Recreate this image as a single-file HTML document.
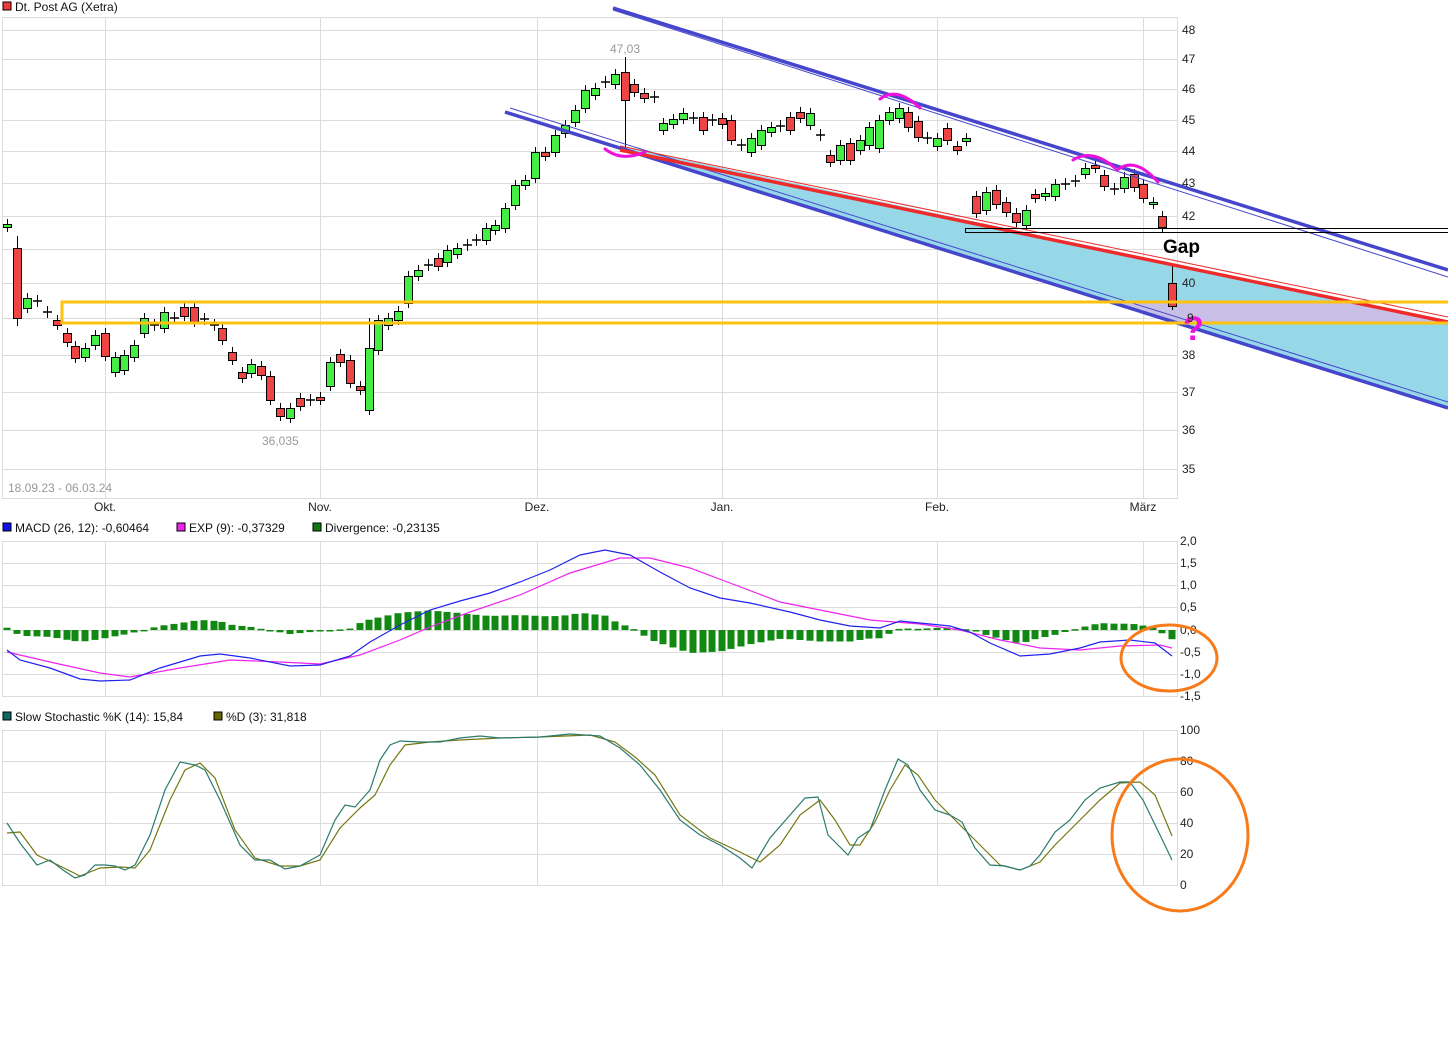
<!DOCTYPE html>
<html><head><meta charset="utf-8"><style>
body{margin:0;background:#fff;width:1448px;height:1037px;overflow:hidden}
svg{display:block;font-family:"Liberation Sans",sans-serif}
</style></head><body>
<svg id="s" width="1448" height="1037" xmlns="http://www.w3.org/2000/svg">
<rect x="0" y="0" width="1448" height="1037" fill="#fff"/>
<g id="grid" stroke="#dcdcdc" stroke-width="1" fill="none"></g>
<polygon points="600,142 1448,322 1448,408" fill="#97d8e8"/>
<polygon points="1110,302 1352,302 1448,322 1448,323 1177,323" fill="#c8bfe6"/>
<g id="candles"></g>
<line x1="613" y1="8" x2="1448" y2="270" stroke="#4646cc" stroke-width="3.5"/>
<line x1="613" y1="10" x2="1448" y2="277" stroke="#4646cc" stroke-width="1"/>
<line x1="505" y1="112" x2="1448" y2="408" stroke="#4646cc" stroke-width="3.5"/>
<line x1="510" y1="108" x2="1448" y2="402" stroke="#4646cc" stroke-width="1"/>
<line x1="620" y1="150" x2="1448" y2="322" stroke="#ee2a2a" stroke-width="3.5"/>
<line x1="620" y1="146" x2="1448" y2="317" stroke="#ee2a2a" stroke-width="1"/>
<rect x="62" y="302" width="1390" height="21" fill="none" stroke="#ffc20e" stroke-width="3"/>
<rect x="965.5" y="228.5" width="490" height="4" fill="none" stroke="#000" stroke-width="1"/>
<g fill="none" stroke="#ee11dd" stroke-width="3" stroke-linecap="round">
<path d="M880,99 Q897,86 920,108"/>
<path d="M1073,160 Q1092,148 1115,168"/>
<path d="M1117,170 Q1135,156 1158,182"/>
<path d="M605,149 Q622,162 645,152"/>
</g>
<text x="1163" y="253" font-size="19" font-weight="bold" fill="#000">Gap</text>
<text x="1183" y="340" font-size="34" font-weight="bold" fill="#ee11dd">?</text>
<text x="610" y="53" font-size="12" fill="#999">47,03</text>
<text x="262" y="445" font-size="12" fill="#999">36,035</text>
<text x="8" y="492" font-size="12" fill="#999">18.09.23 - 06.03.24</text>
<g id="labels" font-size="12" fill="#222"></g>
<rect x="3" y="2" width="8" height="8" fill="#ee3a3a" stroke="#000" stroke-width="1"/>
<text x="15" y="11" font-size="12" fill="#111">Dt. Post AG (Xetra)</text>
<rect x="3" y="523" width="8" height="8" fill="#1111ee" stroke="#000"/>
<text x="15" y="532" font-size="12" fill="#111">MACD (26, 12): -0,60464</text>
<rect x="177" y="523" width="8" height="8" fill="#ee22ee" stroke="#000"/>
<text x="189" y="532" font-size="12" fill="#111">EXP (9): -0,37329</text>
<rect x="313" y="523" width="8" height="8" fill="#117711" stroke="#000"/>
<text x="325" y="532" font-size="12" fill="#111">Divergence: -0,23135</text>
<rect x="3" y="712" width="8" height="8" fill="#116666" stroke="#000"/>
<text x="15" y="721" font-size="12" fill="#111">Slow Stochastic %K (14): 15,84</text>
<rect x="214" y="712" width="8" height="8" fill="#666600" stroke="#000"/>
<text x="226" y="721" font-size="12" fill="#111">%D (3): 31,818</text>
<g id="macd"></g>
<g id="stoch"></g>
<ellipse cx="1169" cy="658" rx="48" ry="33" fill="none" stroke="#f77b1a" stroke-width="3"/>
<ellipse cx="1180" cy="835" rx="68" ry="76" fill="none" stroke="#f77b1a" stroke-width="3"/>
</svg>
<script>
var NS="http://www.w3.org/2000/svg";
function el(p,t,a,txt){var e=document.createElementNS(NS,t);for(var k in a)e.setAttribute(k,a[k]);if(txt!==undefined)e.textContent=txt;p.appendChild(e);return e;}
var g=document.getElementById('grid'),L=document.getElementById('labels');
[[17,498],[541,696],[730,885]].forEach(function(b){
 el(g,'rect',{x:2.5,y:b[0]+.5,width:1175,height:b[1]-b[0]});
 [105,320,537,722,937,1143].forEach(function(x){el(g,'line',{x1:x+.5,y1:b[0],x2:x+.5,y2:b[1]});});
});
var py=[[30,'48'],[59,'47'],[89,'46'],[120,'45'],[151,'44'],[183,'43'],[216,'42'],[249,''],[283,'40'],[318,'9'],[355,'38'],[392,'37'],[430,'36'],[469,'35']];
py.forEach(function(p){el(g,'line',{x1:2,y1:p[0]+.5,x2:1178,y2:p[0]+.5});if(p[1])el(L,'text',{x:p[1]=='9'?1187:1182,y:p[0]+4},p[1]);});
var my=[[541,'2,0'],[563,'1,5'],[585,'1,0'],[607,'0,5'],[630,'0,0'],[652,'-0,5'],[674,'-1,0'],[696,'-1,5']];
my.forEach(function(p){el(g,'line',{x1:2,y1:p[0]+.5,x2:1178,y2:p[0]+.5});el(L,'text',{x:1180,y:p[0]+4},p[1]);});
var sy=[[730,'100'],[761,'80'],[792,'60'],[823,'40'],[854,'20'],[885,'0']];
sy.forEach(function(p){el(g,'line',{x1:2,y1:p[0]+.5,x2:1178,y2:p[0]+.5});el(L,'text',{x:1180,y:p[0]+4},p[1]);});
[[105,'Okt.'],[320,'Nov.'],[537,'Dez.'],[722,'Jan.'],[937,'Feb.'],[1143,'März']].forEach(function(d){el(L,'text',{x:d[0],y:511,'text-anchor':'middle'},d[1]);});
var C=[[7,224,227,'g'],[17,248,318,'r'],[27,298,308,'g'],[37,300,302,'n'],[47,311,313,'n'],[57,320,325,'r'],[67,333,342,'r'],[75,346,358,'r'],[85,348,357,'g'],[95,335,345,'g'],[105,333,356,'r'],[115,357,372,'g'],[124,355,370,'g'],[134,345,357,'g'],[144,318,333,'g'],[154,324,326,'n'],[164,312,328,'g'],[174,317,319,'n'],[184,307,316,'r'],[194,307,322,'r'],[204,318,320,'n'],[214,324,326,'n'],[222,328,340,'r'],[232,352,360,'r'],[242,372,378,'r'],[251,364,373,'g'],[261,366,375,'r'],[270,376,400,'r'],[280,408,416,'r'],[290,408,418,'g'],[300,398,406,'r'],[310,399,401,'n'],[320,397,400,'r'],[330,362,386,'g'],[340,354,362,'r'],[350,360,383,'r'],[360,386,390,'r'],[369,348,410,'g'],[378,320,350,'g'],[388,318,325,'g'],[398,311,320,'g'],[408,276,303,'g'],[418,270,276,'g'],[428,264,266,'n'],[438,258,266,'r'],[447,250,262,'g'],[457,248,254,'g'],[467,244,246,'n'],[476,239,241,'n'],[486,228,240,'g'],[495,225,230,'g'],[505,208,228,'g'],[515,185,205,'g'],[525,180,185,'g'],[535,152,178,'g'],[545,152,156,'r'],[555,135,152,'g'],[565,125,133,'g'],[575,110,122,'g'],[585,90,108,'g'],[595,88,95,'g'],[605,81,83,'n'],[615,74,84,'g'],[625,72,100,'r'],[634,84,92,'r'],[644,93,98,'r'],[654,96,98,'n'],[663,123,130,'g'],[673,119,124,'g'],[683,113,119,'g'],[693,117,119,'n'],[703,117,130,'r'],[712,119,121,'n'],[722,118,124,'r'],[731,120,140,'r'],[741,144,146,'n'],[751,138,152,'g'],[761,130,145,'g'],[771,127,132,'g'],[780,125,127,'n'],[790,117,130,'r'],[800,112,118,'r'],[810,113,125,'g'],[820,134,136,'n'],[830,155,162,'r'],[840,145,160,'g'],[850,143,160,'r'],[860,140,150,'g'],[869,127,145,'g'],[879,120,148,'g'],[889,112,120,'g'],[899,108,118,'g'],[908,112,127,'r'],[918,121,137,'r'],[927,137,139,'n'],[937,138,146,'g'],[947,128,140,'r'],[957,146,150,'r'],[966,138,141,'g'],[976,196,213,'r'],[986,192,210,'g'],[996,190,204,'r'],[1006,202,212,'r'],[1016,213,222,'r'],[1026,210,225,'g'],[1035,194,198,'r'],[1045,193,196,'g'],[1055,184,196,'g'],[1065,183,185,'n'],[1075,180,182,'n'],[1085,168,174,'g'],[1095,165,168,'r'],[1104,175,186,'r'],[1114,188,190,'n'],[1124,177,188,'g'],[1134,174,187,'r'],[1143,184,198,'r'],[1153,202,204,'g'],[1162,216,227,'r'],[1172,283,306,'r']];
var cg=document.getElementById('candles');
C.forEach(function(c){
 var wt=c[1]-5,wb=c[2]+5;
 if(c[0]==625){wt=57;wb=150;} if(c[0]==1172){wt=264;wb=310;} if(c[0]==17){wt=236;wb=326;} if(c[0]==369){wt=318;}
 el(cg,'line',{x1:c[0]+.5,y1:wt,x2:c[0]+.5,y2:wb,stroke:'#000','stroke-width':1});
 var h=Math.max(c[2]-c[1],1);
 if(c[3]=='n')el(cg,'line',{x1:c[0]-4,y1:c[1]+1,x2:c[0]+5,y2:c[1]+1,stroke:'#000','stroke-width':1.5});
 else el(cg,'rect',{x:c[0]-3.5,y:c[1]+.5,width:8,height:h,fill:c[3]=='g'?'#44ee44':'#ee4444',stroke:'#000','stroke-width':1});
});
function interp(P,x){for(var i=1;i<P.length;i++){if(x<=P[i][0]){var a=P[i-1],b=P[i];return a[1]+(b[1]-a[1])*(x-a[0])/(b[0]-a[0]);}}return P[P.length-1][1];}
function pl(p,P,col,w){el(p,'polyline',{points:P.map(function(q){return q.join(',')}).join(' '),fill:'none',stroke:col,'stroke-width':w||1.2});}
var M=[[7,650],[20,660],[50,668],[80,679],[100,681],[130,680],[160,668],[200,656],[220,654],[250,658],[290,666],[320,665],[350,656],[370,642],[400,625],[430,610],[460,601],[490,593],[520,582],[550,570],[580,555],[605,550],[630,555],[660,572],[690,588],[720,598],[750,603],[790,612],[820,620],[850,626],[880,628],[900,621],[920,623],[950,626],[970,632],[990,643],[1020,656],[1050,654],[1080,648],[1100,642],[1130,640],[1155,643],[1172,656]];
var S=[[7,652],[50,662],[100,673],[130,677],[180,668],[230,660],[280,662],[320,664],[360,655],[400,640],[430,627],[470,612],[520,595],[570,573],[620,558],[650,558],[690,568],[730,583],[780,602],[830,612],[870,620],[920,624],[960,630],[1000,640],[1040,648],[1080,650],[1120,646],[1160,645],[1172,648]];
var mg=document.getElementById('macd');
C.forEach(function(c){var d=(interp(S,c[0])-interp(M,c[0]))*1.15;var y=630-d;el(mg,'rect',{x:c[0]-3.5,y:Math.min(y,630),width:7,height:Math.max(Math.abs(d),1.5),fill:'#118811'});});
pl(mg,S,'#ee22ee');pl(mg,M,'#2222ee');
var K=[[7,823],[20,843],[37,865],[50,860],[63,870],[75,878],[85,875],[95,865],[105,865],[115,866],[125,870],[135,865],[150,835],[165,790],[180,762],[195,765],[205,770],[220,800],[240,845],[255,860],[270,860],[285,869],[300,866],[320,855],[335,820],[345,805],[355,807],[370,790],[380,760],[390,745],[400,741],[420,742],[440,742],[460,738],[480,736],[500,738],[540,737],[570,734],[600,736],[620,748],[640,765],[660,790],[680,820],[700,835],[720,845],[740,858],[752,868],[770,838],[790,815],[805,798],[818,797],[828,835],[848,855],[858,838],[870,830],[885,790],[898,759],[908,765],[920,790],[935,810],[950,815],[962,822],[975,848],[990,865],[1005,866],[1020,870],[1030,866],[1040,855],[1055,832],[1070,820],[1085,800],[1100,788],[1120,782],[1130,782],[1143,800],[1160,835],[1172,860]];
var D=[[7,833],[20,832],[37,855],[60,866],[80,876],[100,868],[120,867],[135,868],[150,850],[170,800],[185,770],[200,763],[215,778],[235,830],[255,858],[280,866],[300,866],[320,860],[340,828],[360,808],[375,795],[390,765],[405,745],[430,742],[460,740],[500,738],[540,737],[590,735],[615,742],[635,757],[655,775],[680,815],[710,838],[740,852],[760,862],[780,845],[800,815],[820,800],[835,820],[850,845],[860,845],[875,822],[890,790],[905,765],[918,775],[935,800],[950,815],[970,835],[985,850],[1000,865],[1020,870],[1040,862],[1055,845],[1080,820],[1100,800],[1120,783],[1140,782],[1155,795],[1172,836]];
var sg=document.getElementById('stoch');pl(sg,D,'#777711');pl(sg,K,'#2a7a70');
</script>
</body></html>
